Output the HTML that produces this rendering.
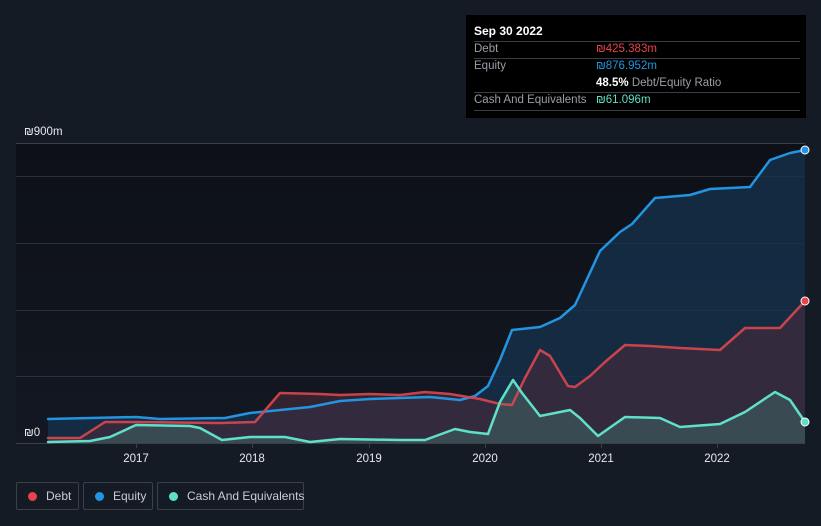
<!DOCTYPE html>
<html><head><meta charset="utf-8"><style>
html,body{margin:0;width:821px;height:526px;overflow:hidden}
body{background:#151b25;font-family:"Liberation Sans",sans-serif;position:relative}
.tt{position:absolute;left:466px;top:15px;width:340px;height:103px;background:#000;color:#fff;font-size:11.5px}
.tt div{white-space:nowrap}
.tt .r{position:absolute;left:8px;right:6px;border-top:1px solid #3a3d44}
.lbl{color:#9a9ea6}
.leg{position:absolute;top:482px;height:28px;border:1px solid #3a3f48;border-radius:2px;color:#c9ccd2;font-size:12px;line-height:26px;box-sizing:border-box;white-space:nowrap}
.leg i{display:inline-block;width:9px;height:9px;border-radius:50%;margin:0 9px 0 11px;vertical-align:-1px}
</style></head><body>
<svg width="821" height="526" style="position:absolute;left:0;top:0">
<defs>
<linearGradient id="pa" x1="0" y1="0" x2="0" y2="1"><stop offset="0" stop-color="#0d1017"/><stop offset="1" stop-color="#131822"/></linearGradient>
</defs>
<rect x="16" y="143" width="789" height="300" fill="url(#pa)"/>
<g stroke="#2a2f38" stroke-width="1">
<line x1="16" y1="143.5" x2="805" y2="143.5" stroke="#3a3f48"/>
<line x1="16" y1="176.5" x2="805" y2="176.5"/>
<line x1="16" y1="243.5" x2="805" y2="243.5"/>
<line x1="16" y1="310.5" x2="805" y2="310.5"/>
<line x1="16" y1="376.5" x2="805" y2="376.5"/>
<line x1="16" y1="443.5" x2="805" y2="443.5" stroke="#3a3f48"/>
</g>
<g stroke="#3a3f48"><line x1="136.5" y1="443" x2="136.5" y2="448"/><line x1="252.5" y1="443" x2="252.5" y2="448"/><line x1="369.5" y1="443" x2="369.5" y2="448"/><line x1="485.5" y1="443" x2="485.5" y2="448"/><line x1="601.5" y1="443" x2="601.5" y2="448"/><line x1="717.5" y1="443" x2="717.5" y2="448"/></g>
<g stroke-linejoin="round" stroke-linecap="round">
<path d="M48 419 L136 417 L160 419 L225 418 L250 413 L310 407 L340 401 L370 399 L430 397 L460 400 L475 396 L488 386 L500 360 L512 330 L540 327 L560 318 L575 305 L600 251 L620 232 L632 224 L655 198 L690 195 L710 189 L750 187 L770 160 L790 153 L805 150 L805 443 L48 443Z" fill="#15334f" fill-opacity="0.75"/>
<path d="M48 438 L80 438 L105 422 L136 422 L220 423 L255 422 L280 393 L320 394 L340 395 L370 394 L400 395 L425 392 L450 394 L480 399 L500 404 L512 405 L525 378 L540 350 L550 356 L568 386 L575 387 L590 376 L605 362 L625 345 L650 346 L680 348 L720 350 L745 328 L780 328 L805 301 L805 443 L48 443Z" fill="#4a2a3a" fill-opacity="0.6"/>
<path d="M48 442 L90 441 L110 437 L136 425 L190 426 L200 428 L222 440 L250 437 L285 437 L310 442 L340 439 L400 440 L425 440 L455 429 L470 432 L488 434 L500 402 L513 380 L522 393 L540 416 L570 410 L580 418 L598 436 L625 417 L660 418 L680 427 L720 424 L745 412 L775 392 L790 400 L805 422 L805 443 L48 443Z" fill="#3f6a6a" fill-opacity="0.5"/>
<path d="M48 419 L136 417 L160 419 L225 418 L250 413 L310 407 L340 401 L370 399 L430 397 L460 400 L475 396 L488 386 L500 360 L512 330 L540 327 L560 318 L575 305 L600 251 L620 232 L632 224 L655 198 L690 195 L710 189 L750 187 L770 160 L790 153 L805 150" fill="none" stroke="#2394df" stroke-width="2.5"/>
<path d="M48 438 L80 438 L105 422 L136 422 L220 423 L255 422 L280 393 L320 394 L340 395 L370 394 L400 395 L425 392 L450 394 L480 399 L500 404 L512 405 L525 378 L540 350 L550 356 L568 386 L575 387 L590 376 L605 362 L625 345 L650 346 L680 348 L720 350 L745 328 L780 328 L805 301" fill="none" stroke="#d9474f" stroke-width="2.5" stroke-opacity="0.9"/>
<path d="M48 442 L90 441 L110 437 L136 425 L190 426 L200 428 L222 440 L250 437 L285 437 L310 442 L340 439 L400 440 L425 440 L455 429 L470 432 L488 434 L500 402 L513 380 L522 393 L540 416 L570 410 L580 418 L598 436 L625 417 L660 418 L680 427 L720 424 L745 412 L775 392 L790 400 L805 422" fill="none" stroke="#5fe0c8" stroke-width="2.5"/>
</g>
<circle cx="805" cy="150" r="4" fill="#2394df" stroke="#fff" stroke-width="1"/>
<circle cx="805" cy="301" r="4" fill="#e8424a" stroke="#fff" stroke-width="1"/>
<circle cx="805" cy="422" r="4" fill="#5fe0c8" stroke="#fff" stroke-width="1"/>
<g fill="#e6e8ec" font-size="11.5" font-family="Liberation Sans,sans-serif">
<text x="24" y="135">₪900m</text>
<text x="24" y="436">₪0</text>
<g text-anchor="middle"><text x="136" y="462">2017</text><text x="252" y="462">2018</text><text x="369" y="462">2019</text><text x="485" y="462">2020</text><text x="601" y="462">2021</text><text x="717" y="462">2022</text></g>
</g>
</svg>
<div class="tt">
<div style="position:absolute;left:8px;top:9px;font-weight:bold;font-size:12px">Sep 30 2022</div>
<div class="r" style="top:26px"></div>
<div class="lbl" style="position:absolute;left:8px;top:28px">Debt</div>
<div style="position:absolute;left:130px;top:28px;color:#e8424a">₪425.383m</div>
<div class="r" style="top:43px"></div>
<div class="lbl" style="position:absolute;left:8px;top:45px">Equity</div>
<div style="position:absolute;left:130px;top:45px;color:#2394df">₪876.952m</div>
<div style="position:absolute;left:130px;top:62px"><b>48.5%</b> <span class="lbl">Debt/Equity Ratio</span></div>
<div class="r" style="top:77px"></div>
<div class="lbl" style="position:absolute;left:8px;top:79px">Cash And Equivalents</div>
<div style="position:absolute;left:130px;top:79px;color:#5fe0c8">₪61.096m</div>
<div class="r" style="top:95px"></div>
</div>
<div class="leg" style="left:16px;width:63px"><i style="background:#e8424a"></i>Debt</div>
<div class="leg" style="left:83px;width:70px"><i style="background:#2394df"></i>Equity</div>
<div class="leg" style="left:157px;width:147px"><i style="background:#5fe0c8"></i>Cash And Equivalents</div>
</body></html>
